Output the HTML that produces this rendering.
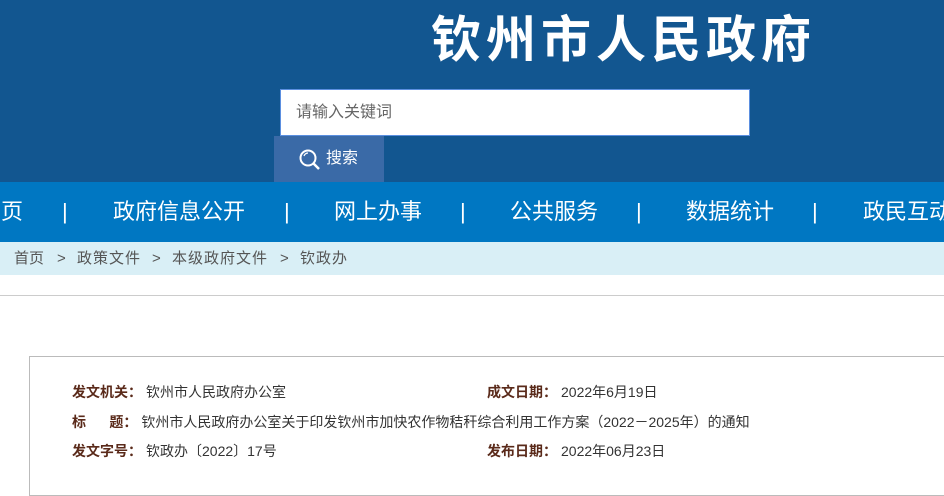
<!DOCTYPE html>
<html><head><meta charset="utf-8"><style>
*{margin:0;padding:0;box-sizing:border-box}
body{width:944px;height:473px;overflow:hidden;background:#fff;font-family:"Liberation Sans","Noto Sans CJK SC",sans-serif;position:relative}
.hd{position:absolute;left:0;top:0;width:944px;height:182px;background:#125690}
.title{position:absolute;left:431px;top:8px;color:#fff;font-size:50px;font-weight:bold;letter-spacing:5px;line-height:64px;white-space:nowrap}
.inp{position:absolute;left:280px;top:89px;width:470px;height:47px;background:#fff;border:1px solid #5b8fe0;color:#666;font-size:16px;line-height:45px;padding-left:15px}
.btn{position:absolute;left:274px;top:136px;width:110px;height:46px;background:#3a6aa7;color:#fff;font-size:16px;line-height:46px;padding-left:52px}
.btn svg{position:absolute;left:25px;top:13px}
.nav{position:absolute;left:0;top:182px;width:944px;height:60px;background:#0077c2;color:#fff;font-size:22px;line-height:60px}
.nav span{position:absolute;white-space:nowrap}
.bc{position:absolute;left:0;top:242px;width:944px;height:33px;background:#d9eff6;color:#555;font-size:15px;line-height:33px}
.bc span{position:absolute;white-space:nowrap}
.line{position:absolute;left:0;top:295px;width:944px;height:1px;background:#ccc}
.box{position:absolute;left:29px;top:356px;width:930px;height:140px;border:1px solid #bbb}
.r{position:absolute;font-size:14px;color:#333;white-space:nowrap;line-height:20px}
.r b{color:#5a2a1a;font-weight:bold;margin-right:4px}
</style></head><body>
<div class="hd">
<div class="title">钦州市人民政府</div>
<div class="inp">请输入关键词</div>
<div class="btn"><svg width="22" height="22" viewBox="0 0 22 22"><circle cx="9" cy="9" r="7.5" fill="none" stroke="#fff" stroke-width="2"/><path d="M14.5 14.5L20 20" stroke="#fff" stroke-width="2.5"/><path d="M5 7a4.5 4.5 0 0 1 4-3" stroke="#fff" fill="none" stroke-width="1.2"/></svg>搜索</div>
</div>
<div class="nav">
<span style="left:-21px">首页</span><span style="left:62px">|</span>
<span style="left:113px">政府信息公开</span><span style="left:284px">|</span>
<span style="left:334px">网上办事</span><span style="left:460px">|</span>
<span style="left:510px">公共服务</span><span style="left:636px">|</span>
<span style="left:686px">数据统计</span><span style="left:812px">|</span>
<span style="left:863px">政民互动</span>
</div>
<div class="bc">
<span style="left:14px">首页</span><span style="left:57px">&gt;</span>
<span style="left:77px;letter-spacing:1px">政策文件</span><span style="left:152px">&gt;</span>
<span style="left:172px;letter-spacing:1px">本级政府文件</span><span style="left:280px">&gt;</span>
<span style="left:300px;letter-spacing:1px">钦政办</span>
</div>
<div class="line"></div>
<div class="box"></div>
<div class="r" style="left:72px;top:382px"><b>发文机关：</b>钦州市人民政府办公室</div>
<div class="r" style="left:487px;top:382px"><b>成文日期：</b>2022年6月19日</div>
<div class="r" style="left:72px;top:412px"><b>标&nbsp;&nbsp;&nbsp;&nbsp;&nbsp;&nbsp;题：</b>钦州市人民政府办公室关于印发钦州市加快农作物秸秆综合利用工作方案（2022－2025年）的通知</div>
<div class="r" style="left:72px;top:441px"><b>发文字号：</b>钦政办〔2022〕17号</div>
<div class="r" style="left:487px;top:441px"><b>发布日期：</b>2022年06月23日</div>
</body></html>
